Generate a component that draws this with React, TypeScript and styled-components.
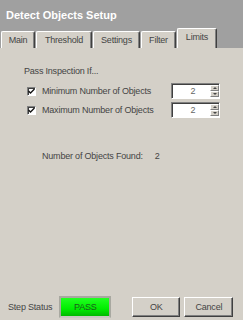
import React from 'react';
import styled, { createGlobalStyle } from 'styled-components';

const GlobalStyle = createGlobalStyle`
  html, body {
    margin: 0;
    padding: 0;
    background: #d4d0c8;
  }
  body {
    font-family: 'Liberation Sans', Arial, sans-serif;
    font-size: 9px;
    letter-spacing: -0.2px;
    color: #444;
  }
`;

const Window = styled.div`
  width: 243px;
  height: 320px;
  display: flex;
  flex-direction: column;
  overflow: hidden;
`;

const TitleBar = styled.div`
  height: 28px;
  background: #a0a0a0;
  color: #fff;
  font-weight: bold;
  font-size: 11px;
  letter-spacing: 0;
  line-height: 12px;
  padding: 9px 0 0 6px;
  box-sizing: border-box;
`;

const TabStrip = styled.div`
  height: 20px;
  background: #a0a0a0;
  display: flex;
  align-items: flex-end;
  gap: 1px;
  padding-left: 1px;
`;

const Tab = styled.div<{ $w: number; $active?: boolean }>`
  width: ${(p) => p.$w}px;
  height: ${(p) => (p.$active ? 20 : 17)}px;
  box-sizing: border-box;
  background: #d4d0c8;
  border-top: 1px solid #ffffff;
  border-left: 1px solid #ffffff;
  border-right: 1px solid #404040;
  box-shadow: inset -1px 0 0 #808080;
  border-radius: 2px 2px 0 0;
  display: flex;
  align-items: center;
  justify-content: center;
  color: #444;
  padding-bottom: ${(p) => (p.$active ? 4 : 0)}px;
`;

const Panel = styled.div`
  flex: 1;
  display: flex;
  flex-direction: column;
  padding: 18px 23px 0 24px;
`;

const Caption = styled.div`
  line-height: 11px;
`;

const Options = styled.div`
  display: flex;
  flex-direction: column;
  gap: 3px;
  margin-top: 6px;
  padding-left: 3px;
`;

const OptionRow = styled.div`
  display: flex;
  align-items: center;
  height: 16px;
`;

const Check = styled.span`
  width: 9px;
  height: 9px;
  box-sizing: border-box;
  background: #fff;
  border-top: 1px solid #808080;
  border-left: 1px solid #808080;
  border-right: 1px solid #fff;
  border-bottom: 1px solid #fff;
  box-shadow: inset 1px 1px 0 #404040;
  display: flex;
  align-items: center;
  justify-content: center;
  margin-right: 6px;
`;

const Label = styled.span`
  flex: 1;
`;

const Spin = styled.div`
  width: 49px;
  height: 16px;
  box-sizing: border-box;
  display: flex;
  background: #fff;
  border-top: 1px solid #808080;
  border-left: 1px solid #808080;
  border-right: 1px solid #fff;
  border-bottom: 1px solid #fff;
  box-shadow: inset 1px 1px 0 #404040;
`;

const SpinValue = styled.div`
  flex: 1;
  display: flex;
  align-items: center;
  justify-content: center;
  padding-left: 4px;
  color: #666;
`;

const SpinButtons = styled.div`
  width: 9px;
  display: flex;
  flex-direction: column;
  padding: 1px 0;
`;

const SpinButton = styled.div`
  flex: 1;
  background: #d4d0c8;
  border-top: 1px solid #fff;
  border-left: 1px solid #fff;
  border-right: 1px solid #808080;
  border-bottom: 1px solid #808080;
  display: flex;
  align-items: center;
  justify-content: center;
`;

const Arrow = styled.span<{ $up?: boolean }>`
  width: 0;
  height: 0;
  border-left: 2px solid transparent;
  border-right: 2px solid transparent;
  ${(p) =>
    p.$up ? 'border-bottom: 2px solid #444;' : 'border-top: 2px solid #444;'}
`;

const FoundRow = styled.div`
  display: flex;
  margin-top: 33px;
  padding-left: 18px;
  line-height: 11px;
`;

const FoundValue = styled.span`
  margin-left: 12px;
`;

const Footer = styled.div`
  display: flex;
  align-items: center;
  padding: 0 9px 1px 8px;
  height: 24px;
  margin-top: auto;
`;

const StatusLabel = styled.span`
  white-space: nowrap;
  flex-shrink: 0;
  margin-right: 7px;
`;

const StatusLamp = styled.div`
  width: 52px;
  height: 22px;
  flex-shrink: 0;
  box-sizing: border-box;
  border: 2px solid #a8a8a0;
  border-bottom-color: #c8c8c0;
  background: linear-gradient(#22ff22, #00ee00 60%, #00b800);
  display: flex;
  align-items: center;
  justify-content: center;
  color: #1d5a1d;
`;

const Button = styled.div<{ $w: number; $ml: number }>`
  width: ${(p) => p.$w}px;
  height: 20px;
  flex-shrink: 0;
  box-sizing: border-box;
  margin-left: ${(p) => p.$ml}px;
  background: #d4d0c8;
  border-top: 1px solid #fff;
  border-left: 1px solid #fff;
  border-right: 1px solid #404040;
  border-bottom: 1px solid #404040;
  box-shadow: inset -1px -1px 0 #808080;
  display: flex;
  align-items: center;
  justify-content: center;
`;

const CheckMark = () => (
  <svg width="7" height="7" viewBox="0 0 7 7">
    <path d="M0.5 3 L2.5 5 L6.5 1" stroke="#111" strokeWidth="1.3" fill="none" />
  </svg>
);

const SpinBox: React.FC<{ value: number }> = ({ value }) => (
  <Spin>
    <SpinValue>{value}</SpinValue>
    <SpinButtons>
      <SpinButton>
        <Arrow $up />
      </SpinButton>
      <SpinButton>
        <Arrow />
      </SpinButton>
    </SpinButtons>
  </Spin>
);

const tabs = [
  { name: 'Main', w: 34 },
  { name: 'Threshold', w: 56 },
  { name: 'Settings', w: 47 },
  { name: 'Filter', w: 35 },
  { name: 'Limits', w: 40, active: true },
];

const options = [
  { label: 'Minimum Number of Objects', value: 2 },
  { label: 'Maximum Number of Objects', value: 2 },
];

export default function App() {
  return (
    <Window>
      <GlobalStyle />
      <TitleBar>Detect Objects Setup</TitleBar>
      <TabStrip>
        {tabs.map((t) => (
          <Tab key={t.name} $w={t.w} $active={t.active}>
            {t.name}
          </Tab>
        ))}
      </TabStrip>
      <Panel>
        <Caption>Pass Inspection If...</Caption>
        <Options>
          {options.map((o) => (
            <OptionRow key={o.label}>
              <Check>
                <CheckMark />
              </Check>
              <Label>{o.label}</Label>
              <SpinBox value={o.value} />
            </OptionRow>
          ))}
        </Options>
        <FoundRow>
          Number of Objects Found:
          <FoundValue>2</FoundValue>
        </FoundRow>
      </Panel>
      <Footer>
        <StatusLabel>Step Status</StatusLabel>
        <StatusLamp>PASS</StatusLamp>
        <Button $w={48} $ml={21}>
          OK
        </Button>
        <Button $w={49} $ml={4}>
          Cancel
        </Button>
      </Footer>
    </Window>
  );
}
